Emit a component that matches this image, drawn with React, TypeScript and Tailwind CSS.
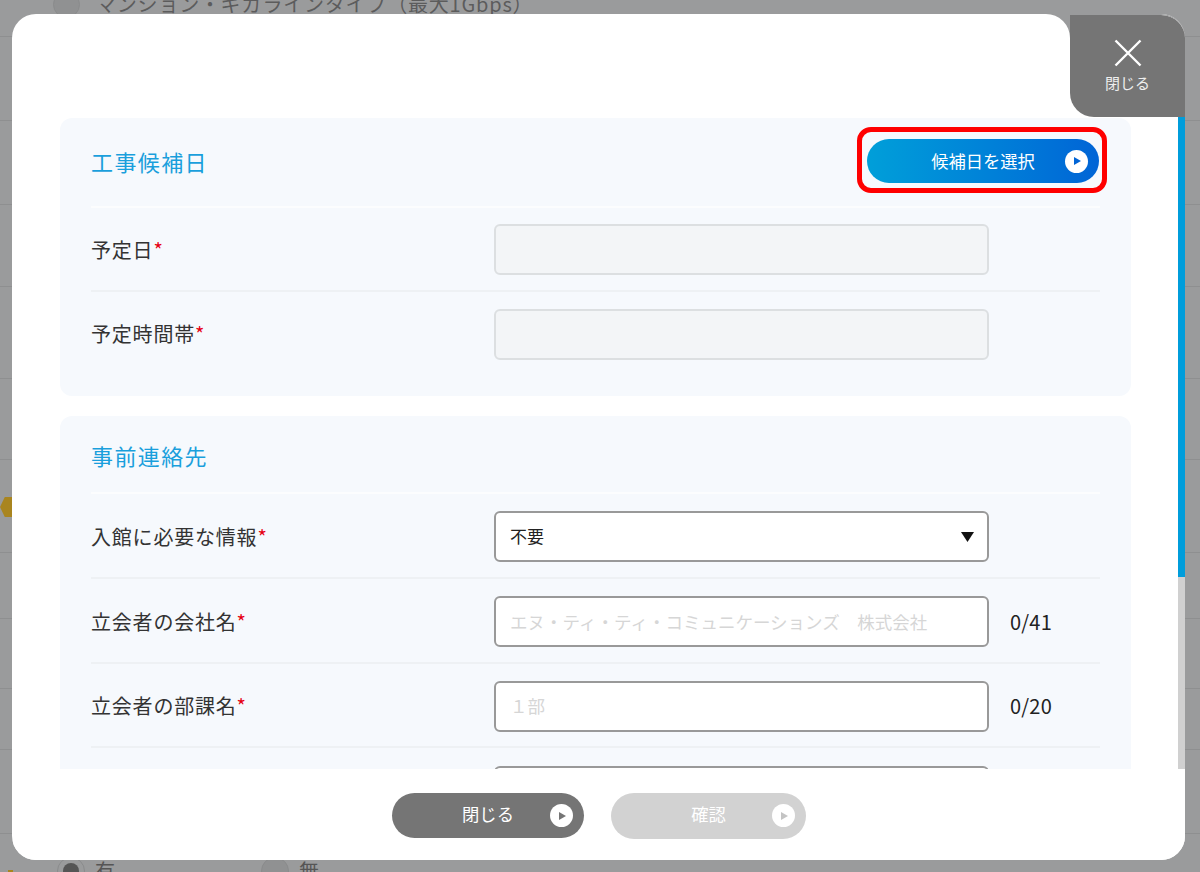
import React from 'react'

const bgLines = ['h-[37px]', 'h-[84px]', 'h-[84px]', 'h-[82px]', 'h-[92px]', 'h-[81px]', 'h-[93px]', 'h-[66px]', 'h-[70px]', 'h-[61px]', 'h-[84px]']

function PlayButton({ label, className, iconClass, textClass }: { label: string; className: string; iconClass: string; textClass?: string }) {
  return (
    <button className={`flex items-center relative ${className}`}>
      <span className={`flex-1 text-center text-white text-[17.3px] ${textClass ?? ''}`}>{label}</span>
      <span className="absolute right-[11px] w-[23px] h-[23px] rounded-full bg-white flex items-center justify-center">
        <svg width="9" height="10" viewBox="0 0 9 10" className="ml-[1px]">
          <path d="M1 1 L8 5 L1 9 Z" fill="currentColor" className={iconClass} />
        </svg>
      </span>
    </button>
  )
}

function Row({ label, children, counter, className }: { label: string; children: React.ReactNode; counter?: string; className: string }) {
  return (
    <div className={`flex items-center ${className}`}>
      <div className="w-[403px] text-[20px] tracking-[0.8px] text-[#333]">
        {label}
        <span className="text-[#e60012]">*</span>
      </div>
      {children}
      {counter && <span className="ml-[21px] text-[20px] tracking-[0.2px] text-[#222]">{counter}</span>}
    </div>
  )
}

function Field({ placeholder, disabled }: { placeholder?: string; disabled?: boolean }) {
  return (
    <div
      className={`w-[495px] h-[51px] rounded-[6px] border-2 flex items-center pl-[14px] text-[17.5px] text-[#d6d6d6] whitespace-nowrap ${
        disabled ? 'bg-[#f3f5f7] border-[#dcdfe1]' : 'bg-white border-[#999]'
      }`}
    >
      {placeholder}
    </div>
  )
}

export default function App() {
  const rowCard2 = 'h-[84.5px] pt-[3px] border-b-2 border-[#eef1f4]'
  return (
    <div className="relative w-[1200px] h-[872px] overflow-hidden bg-[#9a9b9c]" style={{ fontFamily: '"Noto Sans CJK JP", "Noto Sans", sans-serif' }}>
      {/* page behind the overlay */}
      <div className="flex flex-col">
        {bgLines.map((h, i) => (
          <div key={i} className={`${h} border-b border-[#8e8f90]`} />
        ))}
      </div>
      <div className="absolute left-[53px] top-[-11px] flex items-center text-[20px] tracking-[0.8px] text-[#5c5c5c] whitespace-nowrap">
        <span className="w-[27px] h-[27px] rounded-full bg-[#909192] border border-[#8a8b8c] mr-[16px]" />
        マンション・ギガラインタイプ（最大1Gbps）
      </div>
      <div className="absolute left-0 top-[497px] w-[12px] h-[20px] bg-[#a9851f] [clip-path:polygon(40%_0,100%_0,100%_100%,40%_100%,0_50%)]" />
      <div className="absolute left-[8px] top-[870px] w-[5px] h-[2px] bg-[#a9851f]" />
      <div className="absolute left-[57px] top-[856px] flex items-center text-[20px] text-[#555]">
        <span className="w-[28px] h-[28px] rounded-full border border-[#8a8b8c] flex items-center justify-center mr-[10px]">
          <span className="w-[16px] h-[16px] rounded-full bg-[#555]" />
        </span>
        <span className="w-[166px]">有</span>
        <span className="w-[28px] h-[28px] rounded-full bg-[#909192] border border-[#8a8b8c] mr-[10px]" />
        無
      </div>

      {/* modal */}
      <div className="absolute left-[12px] top-[14px] w-[1173px] h-[846px] flex flex-col">
        <div className="flex-1 min-h-0 flex flex-col bg-white rounded-[24px] overflow-hidden">
          <div className="relative h-[755px] pt-[104px] overflow-hidden">
            <div className="w-[1071px] ml-[48px]">
              <section className="bg-[#f6f9fd] rounded-[12px] px-[31px] h-[278px]">
                <div className="flex items-center justify-between h-[90px] pb-[2px] border-b-2 border-[#fcfdfe]">
                  <h2 className="text-[22px] tracking-[1.4px] text-[#1a9fdc] font-normal">工事候補日</h2>
                  <div className="relative mr-[1px]">
                    <PlayButton
                      label="候補日を選択"
                      className="w-[232px] h-[44px] rounded-full bg-gradient-to-r from-[#009fd9] to-[#0064d6]"
                      iconClass="text-[#0064d6]"
                    />
                    {/* annotation frame */}
                    <div className="absolute -left-[10px] -right-[8px] -top-[12px] -bottom-[10px] border-[5px] border-[#ff0000] rounded-[14px]" />
                  </div>
                </div>
                <Row label="予定日" className="h-[84px] pt-[1px] border-b-2 border-[#eef1f4]">
                  <Field disabled />
                </Row>
                <Row label="予定時間帯" className="h-[83px] pt-[1px]">
                  <Field disabled />
                </Row>
              </section>
              <section className="bg-[#f6f9fd] rounded-t-[12px] px-[31px] mt-[20px] h-[400px]">
                <div className="flex items-center h-[78px] pt-[2px] border-b-2 border-[#fcfdfe]">
                  <h2 className="text-[22px] tracking-[1.4px] text-[#1a9fdc] font-normal">事前連絡先</h2>
                </div>
                <Row label="入館に必要な情報" className="h-[85px] pt-[2px] border-b-2 border-[#eef1f4]">
                  <div className="w-[495px] h-[51px] rounded-[6px] border-2 border-[#999] bg-white flex items-center justify-between pl-[14px] pr-[13px] text-[17px] text-[#222]">
                    <span className="-mt-[2px]">不要</span>
                    <svg width="13" height="10" viewBox="0 0 13 10">
                      <path d="M0 0 H13 L6.5 10 Z" fill="#111" />
                    </svg>
                  </div>
                </Row>
                <Row label="立会者の会社名" counter="0/41" className={rowCard2}>
                  <Field placeholder="エヌ・ティ・ティ・コミュニケーションズ　株式会社" />
                </Row>
                <Row label="立会者の部課名" counter="0/20" className={rowCard2}>
                  <Field placeholder="１部" />
                </Row>
                <Row label="立会者の氏名" className="h-[84.5px] pt-[3px]">
                  <Field />
                </Row>
              </section>
            </div>
            {/* scrollbar */}
            <div className="absolute right-0 top-[103px] bottom-0 w-[7px] bg-[#d0d0d0]">
              <div className="h-[460px] bg-[#009ddb]" />
            </div>
          </div>
          <div className="flex-1 flex items-center justify-center gap-[27px] pt-[2px] ml-[1px] bg-white">
            <PlayButton label="閉じる" className="w-[192px] h-[45px] rounded-full bg-[#757575]" iconClass="text-[#757575]" textClass="pb-[3px]" />
            <PlayButton label="確認" className="w-[195px] h-[46px] rounded-full bg-[#d2d2d2]" iconClass="text-[#c4c4c4]" textClass="pb-[3px]" />
          </div>
        </div>
        {/* corner gap between the sheet and the close tab */}
        <div className="absolute right-[115px] top-0 w-[26px] h-[26px] bg-[#9a9b9c]">
          <div className="w-full h-full bg-white rounded-tr-[24px]" />
        </div>
        <div className="absolute right-0 top-0 w-[115px] h-[103px] border-t border-[#9a9b9c] bg-clip-padding bg-[#757575] rounded-tr-[24px] rounded-bl-[24px] flex flex-col items-center pt-[24px] text-white">
          <svg width="28" height="28" viewBox="0 0 28 28" fill="none" stroke="currentColor" strokeWidth="2.4">
            <path d="M1.5 1.5 L26.5 26.5 M26.5 1.5 L1.5 26.5" />
          </svg>
          <span className="text-[15px] leading-[18px] mt-[7px] text-[#eee]">閉じる</span>
        </div>
      </div>
    </div>
  )
}
